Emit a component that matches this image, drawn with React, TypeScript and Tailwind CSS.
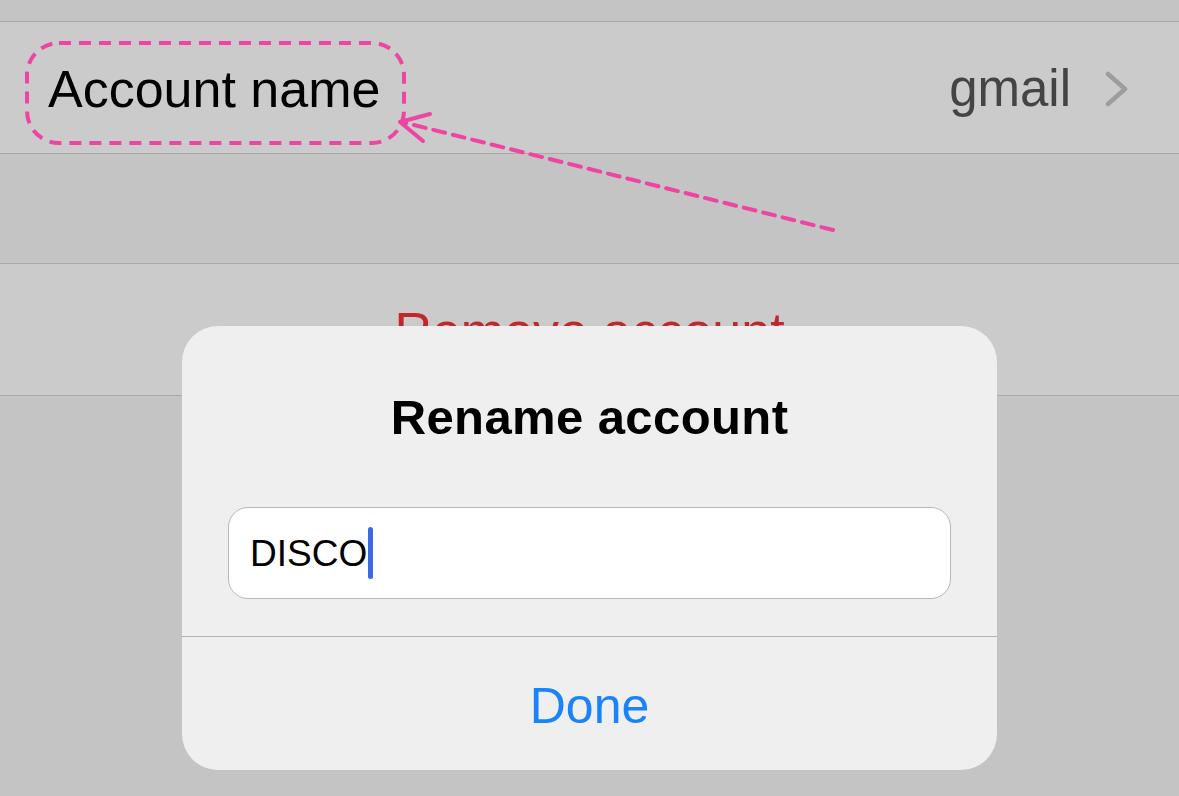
import React from "react";

function Chevron() {
  return (
    <svg width="24" height="36" viewBox="0 0 24 36" className="ml-[34px]">
      <polyline points="3,3 20,18 3,33" fill="none" stroke="#9d9d9d" strokeWidth="4.5" strokeLinecap="round" strokeLinejoin="round" />
    </svg>
  );
}

function Annotation() {
  return (
    <svg className="pointer-events-none absolute left-0 top-0" width="1179" height="796" viewBox="0 0 1179 796">
      <rect x="27" y="43" width="377" height="100" rx="32" fill="none" stroke="#ef45a2" strokeWidth="4" strokeDasharray="12 8" />
      <line x1="833" y1="230" x2="402" y2="122" stroke="#ef45a2" strokeWidth="4" strokeDasharray="12 8" strokeLinecap="round" />
      <polyline points="430,114 400,122 423,141" fill="none" stroke="#ef45a2" strokeWidth="4" strokeLinecap="round" strokeLinejoin="round" />
    </svg>
  );
}

function RenameDialog() {
  return (
    <div className="absolute left-[182px] top-[326px] flex h-[444px] w-[815px] flex-col rounded-[36px] bg-[#efefef]">
      <div className="flex h-[181px] items-end justify-center pb-[65px]">
        <h2 className="text-[49px] font-bold leading-none tracking-[0.4px] text-black">Rename account</h2>
      </div>
      <div className="px-[46px]">
        <div className="flex h-[92px] items-center rounded-[20px] border border-[#b9b9b9] bg-white pl-[21px]">
          <span className="text-[37px] leading-none text-black">DISCO</span>
          <span className="ml-[1px] h-[52px] w-[5px] rounded-full bg-[#3e68ec]"></span>
        </div>
      </div>
      <div className="mt-[37px] h-px bg-[#b3b3b3]"></div>
      <div className="flex flex-1 items-center justify-center pt-[5px]">
        <span className="text-[50px] leading-none text-[#1a82fb]">Done</span>
      </div>
    </div>
  );
}

export default function App() {
  return (
    <div className="relative h-[796px] w-[1179px] overflow-hidden bg-[#c4c4c4]" style={{ fontFamily: '"Liberation Sans", Arial, sans-serif' }}>
      <div className="h-[22px] border-b border-[#a9a9a9]"></div>
      <div className="flex h-[132px] items-center justify-between border-b border-[#a9a9a9] bg-[#cbcbcb] pl-[48px] pr-[50px] pt-[2px]">
        <span className="text-[52px] leading-none text-black">Account name</span>
        <div className="flex items-center">
          <span className="text-[51px] leading-none text-[#444444]">gmail</span>
          <Chevron />
        </div>
      </div>
      <div className="h-[110px] border-b border-[#a9a9a9]"></div>
      <div className="flex h-[132px] items-center justify-center border-b border-[#a9a9a9] bg-[#cbcbcb] pt-[2px]">
        <span className="text-[52px] leading-none text-[#c0292b]">Remove account</span>
      </div>
      <RenameDialog />
      <Annotation />
    </div>
  );
}
